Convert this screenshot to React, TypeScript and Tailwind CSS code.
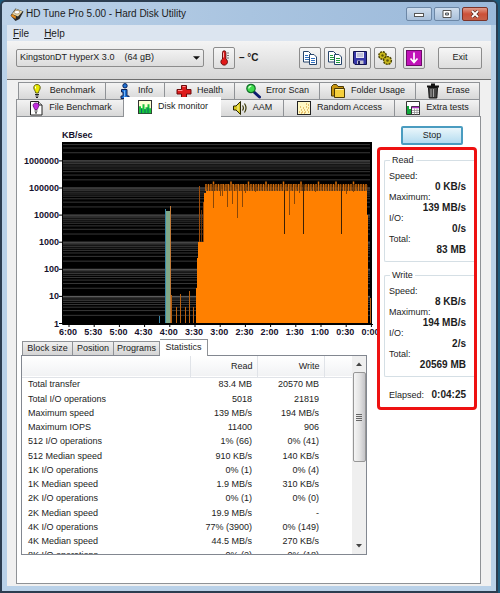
import { ReactNode } from "react";

const TABS_BACK = [
  { name: "Benchmark", icon: <BulbIcon color="#e8e800" />, size: "basis-[88px]" },
  { name: "Info", icon: <InfoIcon />, size: "basis-[59px]" },
  { name: "Health", icon: <HealthIcon />, size: "basis-[70px]" },
  { name: "Error Scan", icon: <SearchIcon />, size: "basis-[85px]" },
  { name: "Folder Usage", icon: <FolderIcon />, size: "basis-[96px]" },
  { name: "Erase", icon: <TrashIcon />, size: "basis-[64px]" },
];

const TABS_FRONT = [
  { name: "File Benchmark", icon: <FileBulbIcon />, size: "basis-[108px]" },
  { name: "Disk monitor", icon: <MonitorIcon />, size: "basis-[97px]", active: true },
  { name: "AAM", icon: <SpeakerIcon />, size: "basis-[63px]" },
  { name: "Random Access", icon: <ScatterIcon />, size: "basis-[111px]" },
  { name: "Extra tests", icon: <ExtraIcon />, size: "basis-[85px]" },
];

const STATS = [
  ["Total transfer", "83.4 MB", "20570 MB"],
  ["Total I/O operations", "5018", "21819"],
  ["Maximum speed", "139 MB/s", "194 MB/s"],
  ["Maximum IOPS", "11400", "906"],
  ["512 I/O operations", "1% (66)", "0% (41)"],
  ["512 Median speed", "910 KB/s", "140 KB/s"],
  ["1K I/O operations", "0% (1)", "0% (4)"],
  ["1K Median speed", "1.9 MB/s", "310 KB/s"],
  ["2K I/O operations", "0% (1)", "0% (0)"],
  ["2K Median speed", "19.9 MB/s", "-"],
  ["4K I/O operations", "77% (3900)", "0% (149)"],
  ["4K Median speed", "44.5 MB/s", "270 KB/s"],
  ["8K I/O operations", "0% (2)", "0% (18)"],
];

const READ = [
  ["Speed:", "0 KB/s"],
  ["Maximum:", "139 MB/s"],
  ["I/O:", "0/s"],
  ["Total:", "83 MB"],
];

const WRITE = [
  ["Speed:", "8 KB/s"],
  ["Maximum:", "194 MB/s"],
  ["I/O:", "2/s"],
  ["Total:", "20569 MB"],
];

function Icon({ children }: { children: ReactNode }) {
  return (
    <svg viewBox="0 0 16 16" className="size-4 shrink-0" aria-hidden="true">
      {children}
    </svg>
  );
}

function BulbIcon({ color }: { color: string }) {
  return (
    <Icon>
      <path d="M8 1.5C5.8 1.5 4.6 3 4.8 5c.1 1.800 1.500 2.600 1.900 5h2.600c.4-2.400 1.800-3.200 1.900-5 .2-2-1-3.500-3.200-3.500z" fill={color} stroke="#55550a" strokeWidth=".9" />
      <path d="M6.500 3.500v2" stroke="#fff" />
      <path d="M6 11.500h4M6.500 13h3M7 14.500h2" stroke="#222" strokeWidth="1.200" />
    </Icon>
  );
}

function InfoIcon() {
  return (
    <Icon>
      <circle cx="8" cy="2.800" r="2.200" fill="#1f74d8" stroke="#0a1f55" />
      <path d="M4.500 6.500h5.500v6.500h2v2.500h-8v-2.500h2v-4h-1.500z" fill="#1f74d8" stroke="#0a1f55" />
      <path d="M7.500 7.500v6" stroke="#7db8f5" />
    </Icon>
  );
}

function HealthIcon() {
  return (
    <Icon>
      <path d="M5.500 2.500h5v4h4.500v4.500h-4.500v4h-5v-4h-4.500v-4.500h4.500z" fill="#dd1c1c" stroke="#6d0b0b" />
      <path d="M6.500 3.500h3M2 7.500h4.500" stroke="#ff8d8d" />
    </Icon>
  );
}

function SearchIcon() {
  return (
    <Icon>
      <path d="M9 9l5.500 5" stroke="#0c1c70" strokeWidth="3" strokeLinecap="round" />
      <circle cx="6" cy="5.500" r="4.200" fill="#3fdc4c" stroke="#12702a" strokeWidth="1.200" />
      <path d="M3.800 5.500a2.500 2.500 0 0 1 2.500-2.300" fill="none" stroke="#d4ffd4" strokeWidth="1.200" />
    </Icon>
  );
}

function FolderIcon() {
  return (
    <Icon>
      <path d="M1.500 13v-9.500l2-2h3l1.500 2h5.500v9.500z" fill="#c8960e" stroke="#4b3905" />
      <path d="M4.500 5.500h10v9h-10z" fill="#f5cf3c" stroke="#4b3905" />
      <path d="M5.500 6.500h8" stroke="#fff2a8" />
    </Icon>
  );
}

function TrashIcon() {
  return (
    <Icon>
      <path d="M3.500 4.500h9l-.7 10.500h-7.600z" fill="#444" stroke="#111" />
      <path d="M6 6v8M8.500 6v8" stroke="#a5a5a5" />
      <path d="M2 3.500h12M6 1.500h4" stroke="#111" strokeWidth="1.800" />
    </Icon>
  );
}

function FileBulbIcon() {
  return (
    <Icon>
      <path d="M2.500 1.500h8l3.500 3.500v10h-11.500z" fill="#fff" stroke="#222" />
      <path d="M10.500 1.500v3.500h3.500" fill="#ddd" stroke="#222" />
      <path d="M8 3c-2 0-3 1.200-2.900 2.800.1 1.500 1.400 2 1.700 3.700h2.400c.3-1.700 1.600-2.200 1.700-3.700.1-1.600-.9-2.800-2.900-2.800z" fill="#c22be0" stroke="#5c0d70" strokeWidth=".8" />
      <path d="M6.500 11h3M7 12.800h2" stroke="#333" strokeWidth="1.200" />
    </Icon>
  );
}

function MonitorIcon() {
  return (
    <Icon>
      <rect x="1.500" y="1.500" width="13" height="13" fill="#fdffd2" stroke="#333" />
      <path d="M2 14.200v-7h2v2h1.500v-4h2v5h1v-2h2v-3h2v4h1.700v5z" fill="#17c43a" />
      <path d="M4.500 9.500v4.500M8 10v4M11 8.500v5.500" stroke="#0b6a6a" />
    </Icon>
  );
}

function SpeakerIcon() {
  return (
    <Icon>
      <path d="M1.500 6h2.500l4.500-4.500v13l-4.500-4.500h-2.500z" fill="#d6c51c" stroke="#2a2703" />
      <path d="M6 5v6" stroke="#fff7a0" />
      <path d="M10.500 5.500q1.800 2.500 0 5M12.500 3.500q3 4.500 0 9" fill="none" stroke="#3b3806" strokeWidth="1.200" />
    </Icon>
  );
}

function ScatterIcon() {
  return (
    <Icon>
      <rect x="1.500" y="1.500" width="13" height="13" fill="#fff8c4" stroke="#222" />
      <path d="M3 12h1M5 10h1M4 7h1M6 12h1M7 8h1M8 10h1M9 12h1M10 7h1M11 10h1M12 5h1M10 4h1M12 12h1M5 13h1M8 13h1M12 8h1" stroke="#d08a1c" strokeWidth="1.200" />
    </Icon>
  );
}

function ExtraIcon() {
  return (
    <Icon>
      <path d="M1.500 1.500h13v13h-13z" fill="#fff" stroke="#333" />
      <path d="M2 14v-8h2v3h2v5z" fill="#12a83b" />
      <path d="M6.500 6.500h8v8h-8z" fill="#fff" stroke="#333" />
      <path d="M7 7.500h7" stroke="#b32fc4" strokeWidth="1.500" />
      <path d="M7 10.500h7M7 12.500h7M9.500 8.500v6M12 8.500v6" stroke="#888" strokeWidth=".7" />
    </Icon>
  );
}

function DriveIcon() {
  return (
    <Icon>
      <path d="M1.500 9.500l5-7 8 3-4 7.500-4 2z" fill="#2a2a2a" />
      <path d="M3 8l4-5 6.500 2.500-4.500 5z" fill="#e9d9a8" />
      <ellipse cx="8" cy="6.200" rx="2.800" ry="1.800" fill="#fff" stroke="#98764a" strokeWidth=".6" />
      <path d="M2 10l4.500 3 .5-2.500-4-2.500z" fill="#e38a1c" />
    </Icon>
  );
}

function ThermometerIcon() {
  return (
    <Icon>
      <path d="M6.500 2.500a1.700 1.700 0 0 1 3.400 0v6.500a3.300 3.300 0 1 1-3.400 0z" fill="#e01818" stroke="#5e0a0a" strokeWidth=".9" />
      <path d="M7.500 2.500v5" stroke="#ffb0b0" />
      <path d="M11 3h2M11 5.500h2M11 8h2" stroke="#555" strokeWidth=".8" />
    </Icon>
  );
}

function CopyIcon({ color }: { color: string }) {
  return (
    <Icon>
      <path d="M1.500 1.500h5l2.500 2.500v8h-7.500z" fill="#fff" stroke="#27456b" />
      <path d="M3 5.500h3M3 7.500h4M3 9.500h4" stroke={color} />
      <path d="M7.500 4.500h4.500l2.500 2.500v7.500h-7z" fill="#fff" stroke="#27456b" />
      <path d="M9 8.500h4M9 10.500h4M9 12.500h4" stroke={color} strokeWidth="1.200" />
    </Icon>
  );
}

function SaveIcon() {
  return (
    <Icon>
      <path d="M1.500 1.500h13v13h-11.500l-1.500-1.500z" fill="#3535a8" stroke="#11114e" />
      <path d="M4 2h8v6h-8z" fill="#e6e6f2" />
      <path d="M5 4h6M5 6h6" stroke="#8989b5" strokeWidth=".8" />
      <path d="M5 10.500h6.500v3.500h-6.500z" fill="#c2c2cf" />
      <path d="M6 11h2v3h-2z" fill="#1c1c5c" />
    </Icon>
  );
}

function GearsIcon() {
  return (
    <Icon>
      <circle cx="5.500" cy="5.500" r="3.700" fill="#c9b81c" stroke="#4a4306" strokeWidth="1.400" strokeDasharray="2 .9" />
      <circle cx="10.500" cy="10.500" r="3.900" fill="#c9b81c" stroke="#4a4306" strokeWidth="1.400" strokeDasharray="2 .9" />
      <circle cx="5.500" cy="5.500" r="1.200" fill="#5e550b" />
      <circle cx="10.500" cy="10.500" r="1.300" fill="#5e550b" />
    </Icon>
  );
}

function DownIcon() {
  return (
    <Icon>
      <rect x=".5" y=".5" width="15" height="15" fill="#c011b8" stroke="#6c0a68" />
      <path d="M8 2.500v9M4.500 8.500l3.500 4 3.500-4" fill="none" stroke="#fff" strokeWidth="1.700" />
    </Icon>
  );
}

function ToolButton({ label, children }: { label: string; children: ReactNode }) {
  return (
    <button
      aria-label={label}
      className="flex h-[22px] w-[22px] items-center justify-center rounded-xs border border-[#8c8c8c] bg-linear-to-b from-[#f6f6f6] to-[#dedede]"
    >
      {children}
    </button>
  );
}

function Tab({ name, icon, size, active }: { name: string; icon: ReactNode; size: string; active?: boolean }) {
  return (
    <button
      role="tab"
      aria-selected={!!active}
      className={`${size} flex grow items-center justify-center gap-[5px] whitespace-nowrap text-[9px] ${
        active
          ? "z-10 -mb-px h-5 bg-white pb-px"
          : "h-[17px] border-t border-r border-[#8f9296] bg-linear-to-b from-[#f3f3f3] to-[#d8d8d8] first:border-l"
      }`}
    >
      {icon}
      {name}
    </button>
  );
}

// log scale, one decade is 27px
const yFor = (v: number) => 206.5 - 27.1 * Math.log10(v);

const DECADES = [1, 10, 100, 1000, 10000, 100000, 1000000];
const TIMES = ["6:00", "5:30", "5:00", "4:30", "4:00", "3:30", "3:00", "2:30", "2:00", "1:30", "1:00", "0:30", "0:00"];

// [x, lower end] of the short drops in the write speed
const DIPS = [
  [196, 91], [203, 79], [205, 79], [210, 90], [215, 87], [220, 101], [225, 90], [228, 76],
  [238, 75], [267, 117], [272, 98], [277, 87], [282, 76], [286, 117], [298, 75], [324, 117], [329, 77], [336, 75],
];

const SPIKES = [[154, 178], [159, 190], [163, 177], [168, 190], [172, 174], [176, 190], [353, 181]];

function SpeedChart() {
  const comb: number[] = [];
  for (let x = 189; x < 350; x += 2.5) comb.push(x);

  return (
    <svg viewBox="0 0 360 223" className="block w-full overflow-visible" role="img" aria-label="Transfer speed over time">
      <rect x="45" y="25" width="310" height="182" fill="#000" />
      {DECADES.map((d) =>
        [1, 2, 3, 4, 5, 6, 7, 8, 9].map((m) => {
          const y = yFor(d * m);
          return y > 26 && y < 205 ? (
            <path key={d * m} d={`M46 ${y}H353`} stroke={m === 1 ? "#666" : "#383838"} strokeWidth="1" />
          ) : null;
        })
      )}

      <rect x="148" y="94" width="6" height="112" fill="#7fa888" />
      <path d="M148.500 92V206M142.500 199V206" stroke="#3a86a8" />
      <path d="M153.500 89V206" stroke="#c07a3a" />
      {SPIKES.map(([x, y]) => (
        <path key={x} d={`M${x + 0.5} ${y}V206`} stroke="#b8600f" />
      ))}

      <path d="M179 206V171H180V141H181V125H187V76H189V74H350V98H351V206Z" fill="#ff8000" />
      <path d="M182.500 69V125M186.500 85V125" stroke="#a04c08" />
      <path d="M184.500 93V125" stroke="#6b3407" />
      {comb.map((x, i) => (
        <path key={x} d={`M${x} ${i % 7 === 3 ? 64.5 : 67}V74`} stroke="#d66e0a" strokeWidth="1.500" />
      ))}
      {DIPS.map(([x, y]) => (
        <path key={x} d={`M${x + 0.5} 67V${y}`} stroke={y > 105 ? "#3d2004" : "#8a4708"} />
      ))}
      {comb.map((x, i) => (
        <path key={x} d={`M${x + 1} 68V${72 + (i % 3)}`} stroke="#6f3a08" strokeWidth=".8" />
      ))}
      <path d="M45.500 25V207.500H356" fill="none" stroke="#000" />

      <g className="font-bold text-[9px]" fill="#16102c">
        <text x="45" y="21">KB/sec</text>
        {DECADES.map((d) => (
          <g key={d}>
            <text x="42" y={yFor(d) + 3} textAnchor="end">{d}</text>
            <path d={`M42 ${yFor(d)}H45`} stroke="#000" />
          </g>
        ))}
        {TIMES.map((t, i) => (
          <g key={t}>
            <text x={51 + i * 25.2} y="218" textAnchor="middle">{t}</text>
            <path d={`M${52 + i * 25.2} 207V210`} stroke="#000" />
          </g>
        ))}
      </g>
    </svg>
  );
}

function Readout({ title, rows }: { title: string; rows: string[][] }) {
  return (
    <fieldset className="rounded-l-xs border border-r-0 border-[#d5dfe5] pt-[5px] pr-[8px] pb-[6px] pl-1">
      <legend className="ml-px px-[2px] text-[9px] leading-[12px]">{title}</legend>
      <dl>
        {rows.map(([label, value]) => (
          <div key={label}>
            <dt className="text-[9px] leading-[10px]">{label}</dt>
            <dd className="text-right text-[10px] leading-[11px] font-bold">{value}</dd>
          </div>
        ))}
      </dl>
    </fieldset>
  );
}

export default function App() {
  return (
    <div className="min-h-screen bg-[#1d5a7c] pr-[2px] font-['Liberation_Sans',Arial,sans-serif] text-[#1c1c1c]">
      <div className="rounded-t-md border-2 border-[#2c3d50] bg-[#b9d1e8] px-[5px] pb-[5px]">
        <header className="-mx-[5px] flex h-[23px] items-center rounded-t-sm bg-linear-to-r from-[#bdd2e8] via-[#a9c4e0] to-[#9bb9da] pr-2 pl-[7px]">
          <DriveIcon />
          <h1 className="ml-px text-[10px]">HD Tune Pro 5.00 - Hard Disk Utility</h1>
          <div className="ml-auto flex gap-[2px]">
            <button aria-label="Minimize" className="flex h-[14px] w-[26px] items-center justify-center rounded-xs border border-[#6c87a6] bg-linear-to-b from-[#cfdded] to-[#a9c0da]">
              <svg viewBox="0 0 10 8" className="h-2 w-[10px]"><rect x=".5" y="3.500" width="9" height="3" fill="#fff" stroke="#555" /></svg>
            </button>
            <button aria-label="Maximize" className="flex h-[14px] w-[26px] items-center justify-center rounded-xs border border-[#6c87a6] bg-linear-to-b from-[#cfdded] to-[#a9c0da]">
              <svg viewBox="0 0 10 8" className="h-2 w-[10px]"><path d="M1 .500h8v7h-8zM3.500 3h3v2h-3z" fill="#fff" fillRule="evenodd" stroke="#555" /></svg>
            </button>
            <button aria-label="Close" className="flex h-[14px] w-[26px] items-center justify-center rounded-xs border border-[#7c3328] bg-linear-to-b from-[#e09a8a] via-[#cc5038] to-[#c5604a]">
              <svg viewBox="0 0 10 8" className="h-2 w-[10px]"><path d="M2 1l6 6M8 1l-6 6" stroke="#5b2a22" strokeWidth="3.200" /><path d="M2 1l6 6M8 1l-6 6" stroke="#fff" strokeWidth="1.800" /></svg>
            </button>
          </div>
        </header>

        <nav className="flex h-4 items-center gap-[15px] bg-[#dce5f0] pl-[6px] text-[10px]">
          <button><u>F</u>ile</button>
          <button><u>H</u>elp</button>
        </nav>

        <div className="flex h-[39px] items-center border-b border-[#6e6e6e] bg-linear-to-b from-[#f4f4f4] to-[#d6d6d6] pr-[9px] pb-[5px] pl-[9px]">
          <div className="relative w-[188px]">
            <select
              aria-label="Drive"
              className="block h-[18px] w-full appearance-none rounded-xs border border-[#8c8c8c] bg-linear-to-b from-[#f2f2f2] to-[#dcdcdc] pl-[3px] text-[9px]"
            >
              <option>{"KingstonDT HyperX 3.0\u00a0\u00a0\u00a0\u00a0(64 gB)"}</option>
            </select>
            <svg viewBox="0 0 8 4" className="pointer-events-none absolute top-[7px] right-1 h-1 w-[7px]"><path d="M0 0h8l-4 4z" fill="#111" /></svg>
          </div>
          <div className="ml-[9px] flex items-center gap-1 text-[10px] font-bold">
            <ToolButton label="Temperature"><ThermometerIcon /></ToolButton>
            <span>– °C</span>
          </div>
          <div className="ml-auto flex gap-[3px]">
            <ToolButton label="Copy text"><CopyIcon color="#2f6fc0" /></ToolButton>
            <ToolButton label="Copy screenshot"><CopyIcon color="#1c9a3c" /></ToolButton>
            <ToolButton label="Save screenshot"><SaveIcon /></ToolButton>
            <ToolButton label="Options"><GearsIcon /></ToolButton>
          </div>
          <div className="ml-[7px] flex gap-[13px]">
            <ToolButton label="Hide"><DownIcon /></ToolButton>
            <button className="h-[22px] w-[44px] rounded-xs border border-[#8c8c8c] bg-linear-to-b from-[#f6f6f6] to-[#dedede] text-[9px]">Exit</button>
          </div>
        </div>

        <main className="bg-[#f0f0f0] pt-[2px] pr-[10px] pb-[2px] pl-[9px]">
          <div role="tablist">
            <div className="flex pr-px pl-[2px]">
              {TABS_BACK.map((t) => <Tab key={t.name} {...t} />)}
            </div>
            <div className="flex h-[17px] items-end pr-px">
              {TABS_FRONT.map((t) => <Tab key={t.name} {...t} />)}
            </div>
          </div>

          <section className="flex items-start border border-[#8f9296] bg-white pb-[28px]">
            <div className="min-w-0 flex-1">
              <SpeedChart />

              <div className="mr-[10px] ml-1">
                <div role="tablist" className="flex h-[15px] items-end pl-px text-[9px] leading-none">
                  <button role="tab" className="h-[14px] w-[51px] border border-b-0 border-[#8f9296] bg-linear-to-b from-[#f0f0f0] to-[#d4d4d4]">Block size</button>
                  <button role="tab" className="h-[14px] w-[41px] border-t border-r border-[#8f9296] bg-linear-to-b from-[#f0f0f0] to-[#d4d4d4]">Position</button>
                  <button role="tab" className="h-[14px] w-[46px] border-t border-r border-[#8f9296] bg-linear-to-b from-[#f0f0f0] to-[#d4d4d4]">Programs</button>
                  <button role="tab" aria-selected="true" className="z-10 -mb-px h-[17px] w-[48px] border-t border-r border-[#8f9296] bg-white pb-px">Statistics</button>
                </div>
                <div className="flex h-[200px] border border-[#828790] bg-white">
                  <div className="min-w-0 flex-1 overflow-hidden">
                    <table className="h-[207px] w-full table-fixed text-[9px] leading-none">
                      <thead>
                        <tr className="h-[21px] border-b border-[#e0e3e8] bg-linear-to-b from-white to-[#f1f2f4]">
                          <th className="border-r border-[#e0e3e8]" />
                          <th className="w-[67px] border-r border-[#e0e3e8] pr-1 text-right font-normal">Read</th>
                          <th className="w-[67px] border-r border-[#e0e3e8] pr-1 text-right font-normal">Write</th>
                          <th className="w-[28px]" />
                        </tr>
                      </thead>
                      <tbody>
                        {STATS.map(([name, read, write]) => (
                          <tr key={name}>
                            <td className="pl-[6px]">{name}</td>
                            <td className="pr-[5px] text-right">{read}</td>
                            <td className="pr-[5px] text-right">{write}</td>
                            <td />
                          </tr>
                        ))}
                      </tbody>
                    </table>
                  </div>
                  <div className="flex w-[14px] flex-col items-center bg-[#efefef] py-[6px]">
                    <svg viewBox="0 0 6 4" className="mb-[6px] h-1 w-[6px]"><path d="M0 4l3-3.500 3 3.500z" fill="#444" /></svg>
                    <div className="flex h-[90px] w-[13px] items-center justify-center rounded-xs border border-[#979797] bg-linear-to-r from-[#f5f5f5] via-[#e4e4e4] to-[#c4c4c8]">
                      <svg viewBox="0 0 6 7" className="h-[7px] w-[6px]"><path d="M0 .500h6M0 2.500h6M0 4.500h6M0 6.500h6" stroke="#666" /></svg>
                    </div>
                    <svg viewBox="0 0 6 4" className="mt-auto h-1 w-[6px]"><path d="M0 0h6l-3 3.500z" fill="#444" /></svg>
                  </div>
                </div>
              </div>
            </div>

            <aside className="z-10 flex w-[103px] flex-col pt-[9px] pr-[3px]">
              <button className="mr-[14px] h-[19px] w-[62px] self-end rounded-xs border-2 border-[#4a9cc0] bg-linear-to-b from-[#eaf6fb] to-[#b4dcf0] text-[9px] leading-none">
                Stop
              </button>
              <div className="mt-[2px] rounded-sm border-3 border-[#ee1111] pt-1 pb-[6px] pl-1">
                <Readout title="Read" rows={READ} />
                <div className="mt-[7px]">
                  <Readout title="Write" rows={WRITE} />
                </div>
                <div className="mt-3 flex items-center justify-between pr-[8px] pl-[5px] leading-[12px]">
                  <span className="text-[9px]">Elapsed:</span>
                  <span className="text-[10px] font-bold">0:04:25</span>
                </div>
              </div>
            </aside>
          </section>
        </main>
      </div>
    </div>
  );
}
